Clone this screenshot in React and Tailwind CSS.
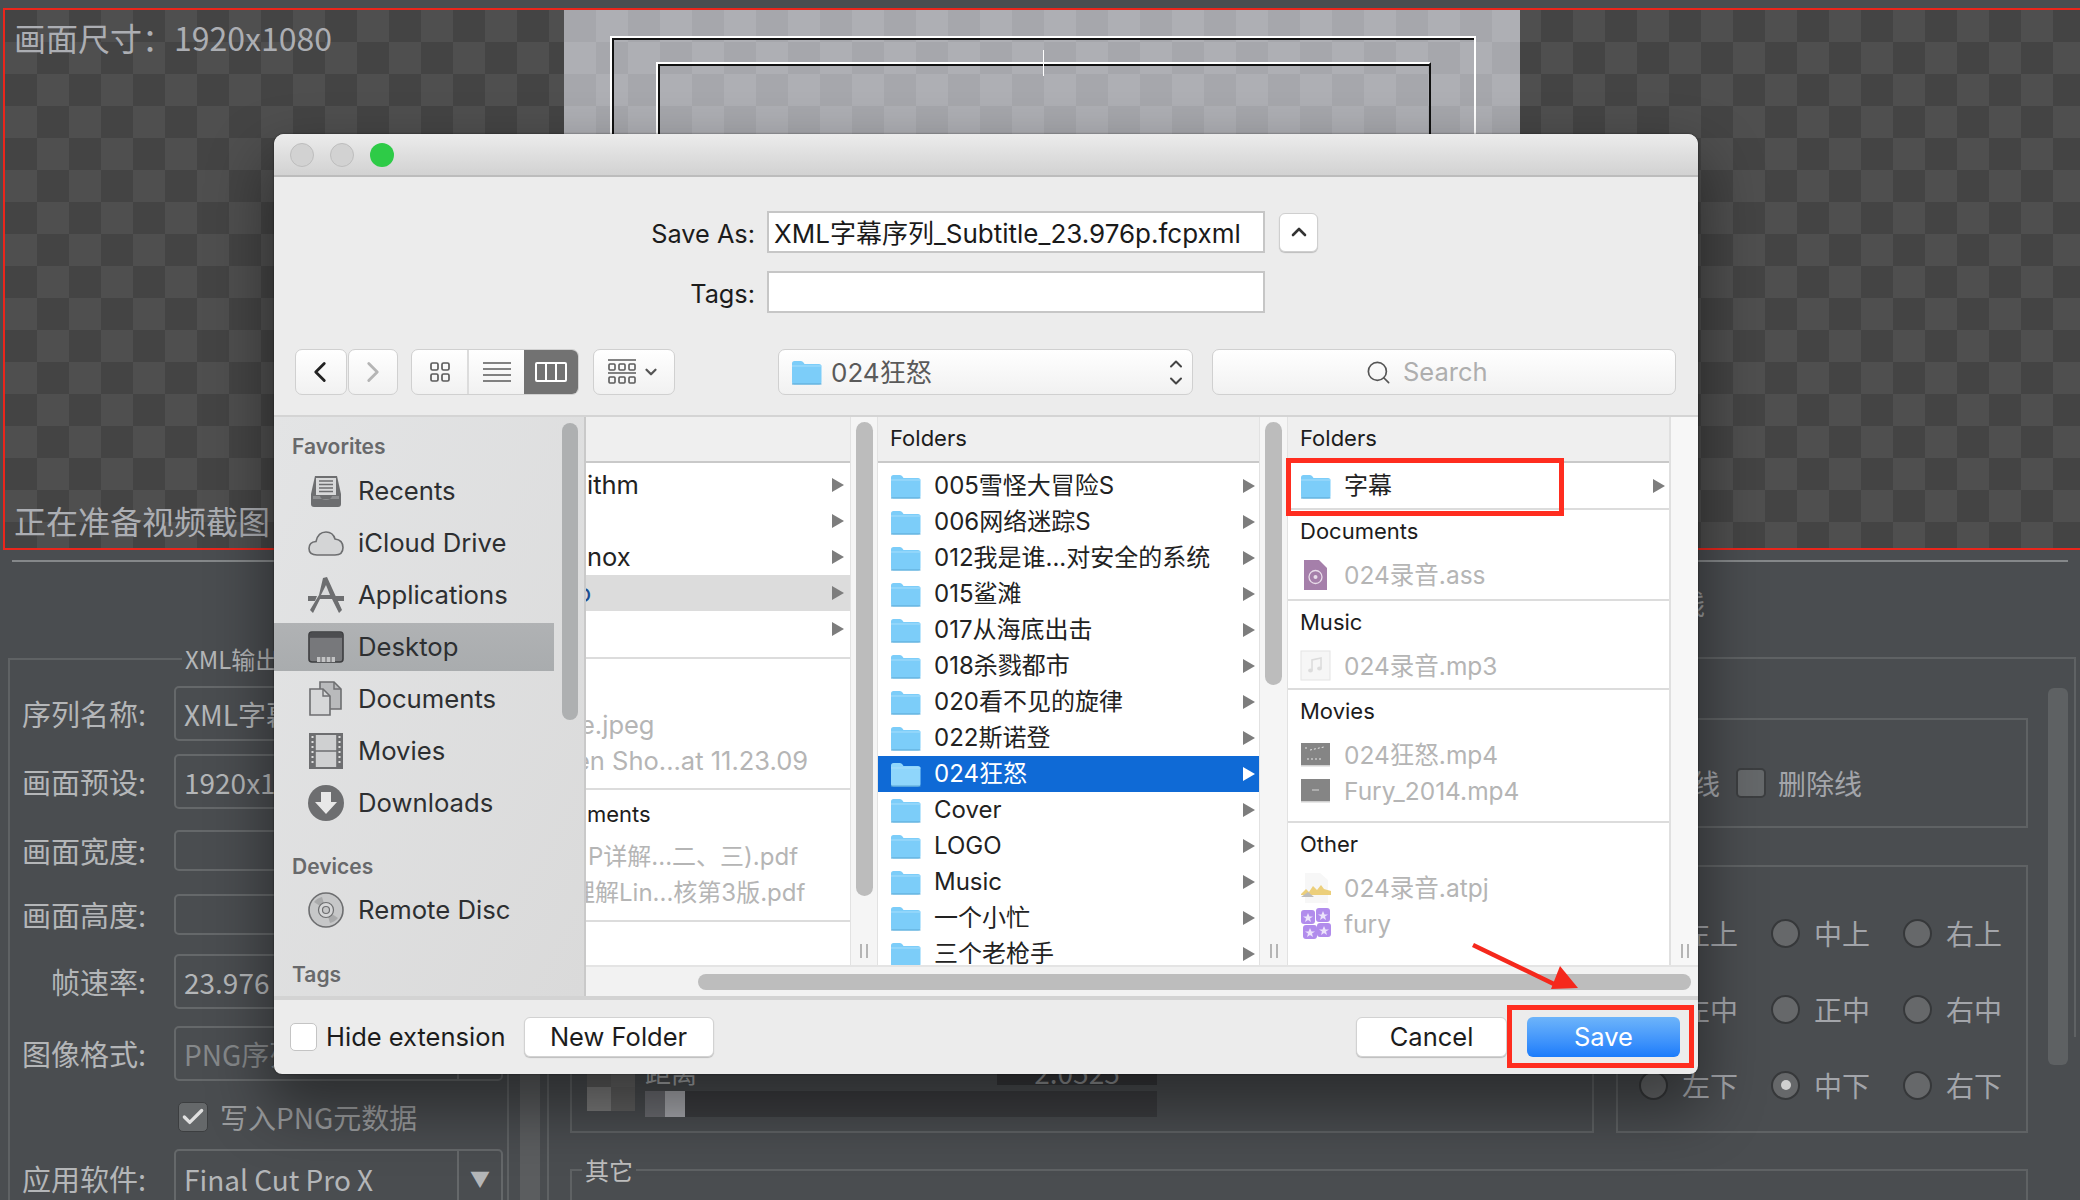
import React from 'react';
import { ChevronLeft, ChevronRight, ChevronUp, ChevronDown, Search, Check } from 'lucide-react';

const uiFont = "font-[Inter,'Noto_Sans_CJK_SC',sans-serif]";
const appFont = "font-['Noto_Sans_CJK_SC',sans-serif]";

function FolderIcon({ light }) {
  return (
    <svg width="31" height="25" viewBox="0 0 31 25" className="shrink-0">
      <path d="M1 3.5Q1 1 3.5 1H10Q11.5 1 12.5 2.5L13.5 4H28Q30.5 4 30.5 6.5V22Q30.5 24.5 28 24.5H3.5Q1 24.5 1 22Z" fill={light ? '#8fd6fb' : '#7ccdf9'} />
      <path d="M1 6H30.5" stroke="#a6defc" strokeWidth="1" />
      <path d="M1 24H30.5" stroke="#5aa7d3" strokeWidth="1" />
    </svg>
  );
}

function Arrow({ white }) {
  return (
    <svg width="12" height="14" viewBox="0 0 12 14" className="shrink-0">
      <path d="M0 0L12 7L0 14Z" fill={white ? '#ffffff' : '#7d7d7d'} />
    </svg>
  );
}

// sidebar glyphs, all on a 36 box
function SideIcon({ name }) {
  const c = '#6d6e70';
  if (name === 'recents') return (
    <svg width="36" height="36" viewBox="0 0 36 36">
      <path d="M7 3H29L33 21V31Q33 34 30 34H6Q3 34 3 31V21Z" fill={c} />
      <rect x="8" y="5" width="20" height="17" fill="#d8d9da" />
      <path d="M11 8H25M11 11.5H25M11 15H25M11 18.5H25" stroke={c} strokeWidth="1.4" />
      <path d="M5 23H12Q13 27 18 27Q23 27 24 23H31V26H5Z" fill="#8e8f91" />
    </svg>
  );
  if (name === 'cloud') return (
    <svg width="36" height="36" viewBox="0 0 36 36">
      <path d="M9 30Q1 30 1 23.5Q1 17 8 16.5Q10 7 18 7Q25 7 27 14Q35 15 35 22.5Q35 30 27 30Z" fill="#d4d5d6" stroke={c} strokeWidth="1.6" />
    </svg>
  );
  if (name === 'apps') return (
    <svg width="36" height="36" viewBox="0 0 36 36">
      <path d="M15 1L19 0L34 33L31 36L24 22H12L5 36L2 33L11 18Z" fill={c} />
      <path d="M0 19H9L7 24H0ZM27 19H36V24H29Z" fill={c} />
      <path d="M18 8L22 18H13Z" fill="#d9dadb" />
    </svg>
  );
  if (name === 'desktop') return (
    <svg width="36" height="36" viewBox="0 0 36 36">
      <rect x="1" y="3" width="34" height="30" rx="3" fill="#77787b" stroke="#3d3e40" strokeWidth="1.6" />
      <rect x="1.8" y="3.8" width="32.4" height="5" fill="#4c4d50" />
      <path d="M9 28H27V33H9Z" fill="#c2c3c4" />
      <path d="M13 28V33M18 28V33M23 28V33" stroke="#5a5b5e" />
    </svg>
  );
  if (name === 'docs') return (
    <svg width="36" height="36" viewBox="0 0 36 36">
      <path d="M12 1H26L33 8V28H12Z" fill="#b9babc" stroke={c} strokeWidth="1.6" />
      <path d="M2 8H15L22 15V34H2Z" fill="#d6d7d8" stroke={c} strokeWidth="1.6" />
      <path d="M15 8V15H22M26 1V8H33" fill="none" stroke={c} strokeWidth="1.4" />
    </svg>
  );
  if (name === 'movies') return (
    <svg width="36" height="36" viewBox="0 0 36 36">
      <rect x="2" y="1" width="32" height="34" fill="#cfd0d1" stroke={c} strokeWidth="2" />
      <path d="M7 1V35M29 1V35M7 18H29" stroke={c} strokeWidth="1.6" />
      <path d="M2 1H7V35H2ZM29 1H34V35H29Z" fill={c} />
      <path d="M3.5 4H5.5M3.5 9H5.5M3.5 14H5.5M3.5 19H5.5M3.5 24H5.5M3.5 29H5.5M30.5 4H32.5M30.5 9H32.5M30.5 14H32.5M30.5 19H32.5M30.5 24H32.5M30.5 29H32.5" stroke="#dddddd" strokeWidth="2" />
    </svg>
  );
  if (name === 'downloads') return (
    <svg width="36" height="36" viewBox="0 0 36 36">
      <circle cx="18" cy="18" r="18" fill={c} />
      <path d="M13 7H23V17H29L18 29L7 17H13Z" fill="#e8e8e8" />
    </svg>
  );
  return (
    <svg width="36" height="36" viewBox="0 0 36 36">
      <circle cx="18" cy="18" r="17" fill="#c6c7c8" stroke={c} strokeWidth="1.6" />
      <path d="M18 18L6 10A14 14 0 0 1 14 5ZM18 18L30 26A14 14 0 0 1 22 31Z" fill="#a9aaab" />
      <circle cx="18" cy="18" r="7.5" fill="#d5d6d7" stroke={c} strokeWidth="1.2" />
      <circle cx="18" cy="18" r="3.5" fill="#c6c7c8" stroke={c} strokeWidth="1.2" />
    </svg>
  );
}

// thumbnails in the last column
function FileIcon({ name }) {
  if (name === 'ass') return (
    <svg width="31" height="32" viewBox="0 0 31 32" className="shrink-0">
      <path d="M4 1H19L27 9V31H4Z" fill="#a57faa" />
      <circle cx="15.5" cy="18" r="6.5" fill="none" stroke="#e9dcea" strokeWidth="1.3" />
      <circle cx="15.5" cy="18" r="2" fill="#e9dcea" />
    </svg>
  );
  if (name === 'mp3') return (
    <svg width="31" height="32" viewBox="0 0 31 32" className="shrink-0">
      <rect x="1" y="1" width="29" height="29" fill="#f6f6f6" stroke="#e4e4e4" />
      <path d="M12 20V10L21 8V18" fill="none" stroke="#dcdcdc" strokeWidth="1.6" />
      <ellipse cx="10.5" cy="20.5" rx="2.4" ry="2" fill="#dcdcdc" />
      <ellipse cx="19.5" cy="18.5" rx="2.4" ry="2" fill="#dcdcdc" />
    </svg>
  );
  if (name === 'mp4a' || name === 'mp4b') return (
    <svg width="31" height="32" viewBox="0 0 31 32" className="shrink-0">
      <rect x="1" y="4" width="29" height="22" fill="#858585" />
      <rect x="1" y="26" width="29" height="1.5" fill="#d0d0d0" />
      {name === 'mp4a'
        ? <path d="M7 20H22M10 11L24 8M5 9H9" stroke="#e4e4e4" strokeWidth="1" strokeDasharray="2 2" />
        : <path d="M12 15H19" stroke="#c9c9c9" strokeWidth="1.2" />}
    </svg>
  );
  if (name === 'atpj') return (
    <svg width="31" height="32" viewBox="0 0 31 32" className="shrink-0">
      <path d="M5 1H20L28 8V31H5Z" fill="#f7f7f7" />
      <path d="M1 22L6 17L9 20L13 14L17 18L21 13L24 17L31 19V23H1Z" fill="#eccf7b" />
      <path d="M1 25L8 20L14 25Z" fill="#bdbdbd" />
    </svg>
  );
  return (
    <svg width="31" height="32" viewBox="0 0 31 32" className="shrink-0">
      <rect x="1" y="2" width="14" height="14" rx="3" fill="#b18cec" />
      <rect x="16" y="0" width="14" height="14" rx="3" fill="#b18cec" />
      <rect x="3" y="17" width="14" height="14" rx="3" fill="#b18cec" />
      <rect x="17" y="15" width="14" height="14" rx="3" fill="#b18cec" />
      <path d="M8 5L9.5 8.5H13L10 10.5L11 14L8 12L5 14L6 10.5L3 8.5H6.5Z M23 3L24.5 6.5H28L25 8.5L26 12L23 10L20 12L21 8.5L18 6.5H21.5Z M10 20L11.5 23.5H15L12 25.5L13 29L10 27L7 29L8 25.5L5 23.5H8.5Z M24 18L25.5 21.5H29L26 23.5L27 27L24 25L21 27L22 23.5L19 21.5H22.5Z" fill="#ece3fb" />
    </svg>
  );
}

function Resizer() {
  return (
    <div className="flex justify-center gap-[4px] h-[14px]">
      <span className="w-[2px] bg-[#b5b5b5]" />
      <span className="w-[2px] bg-[#b5b5b5]" />
    </div>
  );
}

function ScrollStrip({ thumb, width }) {
  return (
    <div className={`${width} shrink-0 bg-[#f5f5f5] border-l border-r border-[#e2e2e2] flex flex-col items-center pt-[5px]`}>
      <div className={`w-[17px] ${thumb} rounded-full bg-[#bcbcbc]`} />
      <div className="mt-auto mb-[7px]"><Resizer /></div>
    </div>
  );
}

const sidebarFav = [
  ['recents', 'Recents'],
  ['cloud', 'iCloud Drive'],
  ['apps', 'Applications'],
];
const sidebarFav2 = [
  ['docs', 'Documents'],
  ['movies', 'Movies'],
  ['downloads', 'Downloads'],
];

const midFolders = ['005雪怪大冒险S', '006网络迷踪S', '012我是谁...对安全的系统', '015鲨滩', '017从海底出击', '018杀戮都市', '020看不见的旋律', '022斯诺登', '024狂怒', 'Cover', 'LOGO', 'Music', '一个小忙', '三个老枪手'];

function SideRow({ icon, label, selected }) {
  return (
    <div className={selected
      ? 'flex items-center gap-[12px] h-[48px] my-[2px] w-[280px] pl-[32px] bg-gradient-to-b from-[#b0b2b4] to-[#a9acae]'
      : 'flex items-center gap-[12px] h-[52px] pl-[32px]'}>
      <span className="w-[40px] flex justify-center"><SideIcon name={icon} /></span>
      <span className="text-[25.7px] leading-none text-[#2d2f31]">{label}</span>
    </div>
  );
}

function FileRow({ icon, name }) {
  return (
    <div className="flex items-center h-[36px] pl-[12px] gap-[13px]">
      <FileIcon name={icon} />
      <span className="text-[24.5px] text-[#b5b5b5] whitespace-nowrap">{name}</span>
    </div>
  );
}

function Section({ title, h, children }) {
  return (
    <div className={`${h} border-t-2 border-[#dcdcdc]`}>
      <div className="h-[42px] flex items-center pl-[12px] text-[22px] text-[#1c1c1c]">{title}</div>
      <div className="pt-[5px]">{children}</div>
    </div>
  );
}

function Dialog() {
  return (
    <div className={`absolute left-[274px] top-[134px] w-[1424px] h-[940px] rounded-t-[10px] rounded-b-[8px] overflow-hidden bg-[#ececec] shadow-[0_0_2px_rgba(0,0,0,0.6),0_30px_60px_6px_rgba(0,0,0,0.42)] ${uiFont}`}>
      <div className="h-[43px] flex items-center gap-[16px] pl-[16px] bg-gradient-to-b from-[#ececec] to-[#d2d2d2] border-b-2 border-[#bcbcbc]">
        <span className="w-[24px] h-[24px] rounded-full bg-[#d2d2d2] border border-[#bdbdbd]" />
        <span className="w-[24px] h-[24px] rounded-full bg-[#d2d2d2] border border-[#bdbdbd]" />
        <span className="w-[24px] h-[24px] rounded-full bg-[#2ecb47]" />
      </div>

      <div className="h-[172px] pt-[34px] flex flex-col gap-[18px]">
        <div className="flex items-center h-[42px]">
          <div className="w-[481px] pt-[3px] text-right text-[25.3px] text-[#1c1c1c]">Save As:</div>
          <div className="ml-[12px] w-[498px] h-[42px] bg-white border-2 border-[#c6c6c6] flex items-center pl-[5px] pt-[3px] text-[26px] text-[#1a1a1a] whitespace-nowrap">XML字幕序列_Subtitle_23.976p.fcpxml</div>
          <div className="ml-[14px] w-[39px] h-[39px] bg-white rounded-[6px] border border-[#cfcfcf] shadow-[0_1px_1px_rgba(0,0,0,0.2)] flex items-center justify-center">
            <ChevronUp size={24} strokeWidth={2.6} className="text-[#333]" />
          </div>
        </div>
        <div className="flex items-center h-[42px]">
          <div className="w-[481px] pt-[3px] text-right text-[25.3px] text-[#1c1c1c]">Tags:</div>
          <div className="ml-[12px] w-[498px] h-[42px] bg-white border-2 border-[#c6c6c6]" />
        </div>
      </div>

      <div className="h-[46px] flex items-stretch pl-[21px]">
        <div className="w-[52px] rounded-[7px] border border-[#d0d0d0] bg-gradient-to-b from-white to-[#f1f1f1] flex items-center justify-center pr-[2px]">
          <ChevronLeft size={34} strokeWidth={2} className="text-[#222]" />
        </div>
        <div className="ml-[1px] w-[50px] rounded-[7px] border border-[#d0d0d0] bg-gradient-to-b from-white to-[#f1f1f1] flex items-center justify-center">
          <ChevronRight size={34} strokeWidth={2} className="text-[#b5b5b5]" />
        </div>
        <div className="ml-[13px] w-[168px] rounded-[7px] border border-[#d0d0d0] bg-gradient-to-b from-white to-[#f1f1f1] flex overflow-hidden">
          <div className="w-[57px] flex items-center justify-center border-r-2 border-[#dcdcdc]">
            <svg width="20" height="20" viewBox="0 0 20 20" fill="none" stroke="#5b5b5b" strokeWidth="1.7">
              <rect x="1" y="1" width="7" height="7" rx="1.5" /><rect x="12" y="1" width="7" height="7" rx="1.5" />
              <rect x="1" y="12" width="7" height="7" rx="1.5" /><rect x="12" y="12" width="7" height="7" rx="1.5" />
            </svg>
          </div>
          <div className="w-[55px] flex items-center justify-center">
            <svg width="28" height="20" viewBox="0 0 28 20" stroke="#5b5b5b" strokeWidth="1.7">
              <path d="M0 1H28M0 7H28M0 13H28M0 19H28" />
            </svg>
          </div>
          <div className="flex-1 bg-[#727272] flex items-center justify-center">
            <svg width="32" height="20" viewBox="0 0 32 20" fill="none" stroke="#ffffff" strokeWidth="2">
              <rect x="1" y="1" width="30" height="18" rx="1" /><path d="M11 1V19M21 1V19" />
            </svg>
          </div>
        </div>
        <div className="ml-[14px] w-[82px] rounded-[7px] border border-[#d0d0d0] bg-gradient-to-b from-white to-[#f1f1f1] flex items-center justify-center gap-[6px]">
          <svg width="28" height="26" viewBox="0 0 28 26" fill="none" stroke="#5b5b5b" strokeWidth="1.6">
            <path d="M0 1H28M0 14H28" />
            <rect x="1" y="5" width="6" height="6" rx="1" /><rect x="11" y="5" width="6" height="6" rx="1" /><rect x="21" y="5" width="6" height="6" rx="1" />
            <rect x="1" y="18" width="6" height="6" rx="1" /><rect x="11" y="18" width="6" height="6" rx="1" /><rect x="21" y="18" width="6" height="6" rx="1" />
          </svg>
          <ChevronDown size={18} strokeWidth={3} className="text-[#555]" />
        </div>
        <div className="ml-[103px] w-[415px] rounded-[7px] border border-[#d0d0d0] bg-gradient-to-b from-white to-[#f1f1f1] flex items-center pl-[12px]">
          <FolderIcon />
          <span className="ml-[9px] text-[26px] text-[#5a5a5a]">024狂怒</span>
          <span className="ml-auto mr-[6px] flex flex-col -space-y-[3px] text-[#444]">
            <ChevronUp size={20} strokeWidth={2.4} />
            <ChevronDown size={20} strokeWidth={2.4} />
          </span>
        </div>
        <div className="ml-[19px] w-[464px] rounded-[7px] border border-[#d0d0d0] bg-gradient-to-b from-white to-[#f1f1f1] flex items-center gap-[11px] pl-[152px]">
          <Search size={27} strokeWidth={1.5} className="text-[#555]" />
          <span className="text-[25.5px] text-[#aeaeae]">Search</span>
        </div>
      </div>

      <div className="mt-[20px] h-[581px] border-t-2 border-[#d4d4d4] flex bg-white">
        {/* sidebar */}
        <div className="relative w-[312px] shrink-0 border-r-2 border-[#c9c9c9] bg-gradient-to-br from-[#e3e4e5] to-[#dadada]">
          <div className="pl-[18px] h-[48px] pt-[16px] text-[21px] font-semibold leading-[28px] text-[#68696b]">Favorites</div>
          {sidebarFav.map(([i, l]) => <SideRow key={l} icon={i} label={l} />)}
          <SideRow icon="desktop" label="Desktop" selected />
          {sidebarFav2.map(([i, l]) => <SideRow key={l} icon={i} label={l} />)}
          <div className="pl-[18px] mt-[23px] h-[32px] text-[21px] font-semibold leading-[30px] text-[#68696b]">Devices</div>
          <SideRow icon="disc" label="Remote Disc" />
          <div className="pl-[18px] mt-[24px] text-[21px] font-semibold leading-[30px] text-[#68696b]">Tags</div>
          <div className="absolute left-[288px] top-[6px] w-[16px] h-[297px] rounded-full bg-[#aeb0b1]" />
        </div>

        <div className="flex-1 min-w-0 flex flex-col">
          <div className="flex h-[548px] overflow-hidden">
            {/* clipped first column */}
            <div className="w-[264px] shrink-0 overflow-hidden text-[25.5px] text-[#222]">
              <div className="h-[46px] bg-[#efefef] border-b-2 border-[#c9c9c9]" />
              <div className="h-[196px] pt-[4px] border-b-2 border-[#dcdcdc]">
                {['ithm', '', 'nox', 'o', ''].map((t, i) => (
                  <div key={i} className={i === 3 ? 'h-[36px] flex items-center justify-between pr-[6px] bg-[#dcdcdc]' : 'h-[36px] flex items-center justify-between pr-[6px]'}>
                    <span className={i === 3 ? '-ml-[10px] text-[#1b4d91]' : 'pl-[1px]'}>{t}</span>
                    <Arrow />
                  </div>
                ))}
              </div>
              <div className="h-[131px] pt-[48px] border-b-2 border-[#dcdcdc] text-[#b5b5b5] whitespace-nowrap">
                <div className="h-[36px] -ml-[6px] flex items-center">e.jpeg</div>
                <div className="h-[36px] -ml-[11px] flex items-center">en Sho...at 11.23.09</div>
              </div>
              <div className="h-[132px] border-b-2 border-[#dcdcdc] whitespace-nowrap text-[24px]">
                <div className="h-[49px] pl-[1px] flex items-center text-[22px] text-[#1c1c1c]">ments</div>
                <div className="h-[36px] pl-[2px] flex items-center text-[#b5b5b5]">P详解...二、三).pdf</div>
                <div className="h-[36px] -ml-[15px] flex items-center text-[#b5b5b5]">理解Lin...核第3版.pdf</div>
              </div>
            </div>
            <ScrollStrip thumb="h-[474px]" width="w-[28px]" />

            {/* folders */}
            <div className="w-[381px] shrink-0 overflow-hidden">
              <div className="h-[46px] pb-[2px] bg-[#efefef] border-b-2 border-[#c9c9c9] flex items-center pl-[12px] text-[22px] text-[#1c1c1c]">Folders</div>
              <div className="pt-[5px]">
                {midFolders.map((f) => (
                  <div key={f} className={f === '024狂怒'
                    ? 'h-[36px] flex items-center pl-[12px] pr-[4px] bg-[#0f6ad6] text-white'
                    : 'h-[36px] flex items-center pl-[12px] pr-[4px] text-[#222]'}>
                    <FolderIcon light={f === '024狂怒'} />
                    <span className="ml-[13px] text-[24px] whitespace-nowrap">{f}</span>
                    <span className="ml-auto"><Arrow white={f === '024狂怒'} /></span>
                  </div>
                ))}
              </div>
            </div>
            <ScrollStrip thumb="h-[263px]" width="w-[29px]" />

            {/* last column */}
            <div className="w-[381px] shrink-0 overflow-hidden">
              <div className="h-[46px] pb-[2px] bg-[#efefef] border-b-2 border-[#c9c9c9] flex items-center pl-[12px] text-[22px] text-[#1c1c1c]">Folders</div>
              <div className="h-[45px] pt-[5px] text-[24px]">
                <div className="h-[36px] flex items-center pl-[12px] pr-[4px] text-[#222]">
                  <FolderIcon />
                  <span className="ml-[13px]">字幕</span>
                  <span className="ml-auto"><Arrow /></span>
                </div>
              </div>
              <Section title="Documents" h="h-[91px]"><FileRow icon="ass" name="024录音.ass" /></Section>
              <Section title="Music" h="h-[89px]"><FileRow icon="mp3" name="024录音.mp3" /></Section>
              <Section title="Movies" h="h-[133px]">
                <FileRow icon="mp4a" name="024狂怒.mp4" />
                <FileRow icon="mp4b" name="Fury_2014.mp4" />
              </Section>
              <Section title="Other" h="h-[144px]">
                <FileRow icon="atpj" name="024录音.atpj" />
                <FileRow icon="fury" name="fury" />
              </Section>
            </div>
            <div className="flex-1 bg-[#f7f7f7] border-l-2 border-[#e0e0e0] flex flex-col justify-end pb-[7px]"><Resizer /></div>
          </div>
          <div className="flex-1 bg-[#f2f2f2] border-t-2 border-[#e4e4e4] pl-[112px] pr-[7px] pt-[7px]">
            <div className="h-[16px] rounded-full bg-[#bdbdbd]" />
          </div>
        </div>
      </div>

      <div className="h-[78px] border-t-4 border-[#d3d3d3] flex items-center pl-[16px] pr-[18px] text-[25.5px] text-[#1c1c1c]">
        <span className="w-[27px] h-[28px] rounded-[5px] bg-white border border-[#c4c4c4]" />
        <span className="ml-[9px]">Hide extension</span>
        <button className="ml-[18px] w-[190px] h-[40px] rounded-[6px] bg-white border border-[#d2d2d2] shadow-[0_1px_1px_rgba(0,0,0,0.2)]">New Folder</button>
        <button className="ml-auto w-[151px] h-[40px] rounded-[6px] bg-white border border-[#d2d2d2] shadow-[0_1px_1px_rgba(0,0,0,0.2)]">Cancel</button>
        <button className="ml-[20px] w-[153px] h-[40px] rounded-[6px] bg-gradient-to-b from-[#6db4fa] to-[#1a7cfb] text-white">Save</button>
      </div>
    </div>
  );
}

function Field({ top, h, label, text, drop, muted }) {
  return (
    <div className={`flex items-center ${top}`}>
      <div className="w-[136px] text-right text-[29px] text-[#b4b6b8] whitespace-nowrap">{label}</div>
      <div className={`ml-[28px] w-[329px] ${h} rounded-[5px] border-2 border-[#65686a] flex items-center pl-[8px] text-[28px] ${muted ? 'text-[#85888a]' : 'text-[#b4b6b8]'} whitespace-nowrap overflow-hidden`}>
        <span>{text}</span>
        {drop && (
          <span className="ml-auto w-[44px] h-full border-l-2 border-[#65686a] flex items-center justify-center text-[20px]">{drop === 'arrow' ? '▼' : ''}</span>
        )}
      </div>
    </div>
  );
}

function Radio({ label, on }) {
  return (
    <div className="flex items-center gap-[14px]">
      <span className="w-[29px] h-[29px] rounded-full bg-[#66686a] border-2 border-[#36383a] flex items-center justify-center">
        {on && <span className="w-[10px] h-[10px] rounded-full bg-[#d0d0d0]" />}
      </span>
      <span className="text-[28px] text-[#a3a5aa]">{label}</span>
    </div>
  );
}

export default function App() {
  return (
    <div className={`relative w-[2080px] h-[1200px] overflow-hidden bg-[#4a4d50] ${appFont}`}>
      <div className="pt-[8px] pl-[3px]">
        <div className="h-[542px] border-2 border-r-0 border-[#ea261c] flex bg-[repeating-conic-gradient(#4f4f4f_0_25%,#444444_0_50%)] bg-[length:64px_64px]">
          <div className="w-[559px] flex flex-col justify-between pl-[9px] pt-[5px] pb-[5px] text-[#acaeb3]">
            <div className="text-[32px] leading-[44px] whitespace-nowrap">画面尺寸：1920x1080</div>
            <div className="text-[32px] leading-[46px] whitespace-nowrap">正在准备视频截图</div>
          </div>
          <div className="w-[956px] pt-[26px] pl-[46px] bg-[repeating-conic-gradient(#aeafb4_0_25%,#a6a7ac_0_50%)] bg-[length:64px_64px]">
            <div className="relative w-[866px] h-[300px] border-t-2 border-l-2 border-r-2 border-white shadow-[inset_0_2px_0_#111,inset_2px_0_0_#111] pt-[24px] pl-[44px]">
              <div className="w-[775px] h-[250px] border-t-2 border-l-2 border-[#ffffff] border-r-2 border-r-[#111] shadow-[inset_0_2px_0_#111,inset_2px_0_0_#111]" />
              <span className="absolute left-[431px] top-[12px] w-[1px] h-[26px] bg-white" />
            </div>
          </div>
        </div>
      </div>

      <div className="mt-[10px] mx-[12px] h-[2px] bg-[#85888a]" />

      <div className="flex items-start">
        <fieldset className="ml-[8px] mt-[83px] w-[501px] h-[700px] border-2 border-[#5f6264] shrink-0">
          <legend className="ml-[172px] px-[3px] text-[24px] leading-[28px] text-[#b4b6b8]">XML输出</legend>
          <Field top="mt-[13px]" h="h-[55px]" label="序列名称:" text="XML字幕序列_Subtitle" />
          <Field top="mt-[13px]" h="h-[55px]" label="画面预设:" text="1920x1080" drop="empty" />
          <Field top="mt-[20px]" h="h-[41px]" label="画面宽度:" text="" />
          <Field top="mt-[20px]" h="h-[41px]" label="画面高度:" text="" />
          <Field top="mt-[18px]" h="h-[55px]" label="帧速率:" text="23.976" drop="empty" />
          <Field top="mt-[17px]" h="h-[55px]" label="图像格式:" text="PNG序列" drop="empty" muted />
          <div className="mt-[16px] ml-[168px] flex items-center gap-[12px]">
            <span className="w-[30px] h-[30px] rounded-[5px] bg-[#65686a] border border-[#3c3e40] flex items-center justify-center">
              <Check size={26} strokeWidth={3} className="text-[#e0e0e0]" />
            </span>
            <span className="text-[28px] leading-[40px] text-[#9a9c9e]">写入PNG元数据</span>
          </div>
          <Field top="mt-[12px]" h="h-[60px]" label="应用软件:" text="Final Cut Pro X" drop="arrow" />
        </fieldset>

        <div className="ml-[11px] w-[20px] h-[638px] shrink-0 bg-[#5b5d5f]" />

        <div className="ml-[7px] w-[1529px] h-[638px] shrink-0 border-l-2 border-[#5f6264] pl-[21px]">
          <div className="h-[26px] mt-[28px] ml-[1107px] text-[28px] leading-[26px] text-[#9a9c9e]">线</div>
          <div className="mt-[41px] flex items-start">
            <div className="w-[1024px] h-[476px] border-2 border-[#5f6264] flex flex-col justify-end pl-[15px] pb-[14px]">
              <div className="flex items-end">
                <div className="w-[48px] h-[72px] mb-[6px] shrink-0 grid grid-cols-2 grid-rows-[48px_24px]">
                  <span className="bg-[#5c5c5c]" /><span className="bg-[#646464]" />
                  <span className="bg-[#7c7c7c]" /><span className="bg-[#606060]" />
                </div>
                <div className="ml-[10px] w-[512px] shrink-0">
                  <div className="h-[26px] flex items-center justify-between">
                    <span className="text-[26px] leading-[26px] text-[#a8aaac]">距离</span>
                    <span className="w-[160px] h-[26px] bg-[#36373a] text-center text-[28px] leading-[26px] text-[#8e9092]">2.0525</span>
                  </div>
                  <div className="mt-[6px] h-[26px] bg-[#3c3d40] flex">
                    <span className="w-[20px] bg-[#6c6d72]" />
                    <span className="w-[20px] bg-[#a8a9ae]" />
                  </div>
                </div>
              </div>
            </div>
            <div className="ml-[10px] w-[472px] h-[380px] border-t-2 border-r-2 border-[#5f6264] pl-[12px] pt-[59px] flex">
              <div className="w-[412px] shrink-0">
                <div className="h-[110px] border-2 border-[#5f6264] flex items-center pl-[18px] pt-[20px]">
                  <span className="text-[28px] text-[#a3a5aa]">下划线</span>
                  <span className="ml-[16px] w-[30px] h-[30px] rounded-[5px] bg-[#65686a] border-2 border-[#3c3e40]" />
                  <span className="ml-[12px] text-[28px] text-[#a3a5aa]">删除线</span>
                </div>
                <div className="mt-[37px] h-[268px] border-2 border-[#5f6264] pt-[28px] pl-[21px] grid grid-cols-[132px_132px_132px] auto-rows-[76px] items-center">
                  <Radio label="左上" /><Radio label="中上" /><Radio label="右上" />
                  <Radio label="左中" /><Radio label="正中" /><Radio label="右中" />
                  <Radio label="左下" /><Radio label="中下" on /><Radio label="右下" />
                </div>
              </div>
              <div className="ml-[20px] mt-[-30px] w-[20px] h-[377px] rounded-[6px] bg-[#5e6163]" />
            </div>
          </div>
          <fieldset className="mt-[19px] w-[1458px] h-[120px] border-2 border-[#5f6264]">
            <legend className="ml-[10px] px-[3px] text-[24px] leading-[36px] text-[#bdbdbd]">其它</legend>
            <div className="mt-[14px] ml-[423px] w-[162px] h-[40px] bg-[#2f3032]" />
          </fieldset>
        </div>
      </div>

      <Dialog />

      {/* red annotations from the screenshot's author */}
      <div className="absolute left-[1286px] top-[458px] w-[278px] h-[58px] border-[5px] border-[#ff2d1f]" />
      <div className="absolute left-[1507px] top-[1005px] w-[187px] h-[63px] border-[5px] border-[#ff2d1f]" />
      <svg className="absolute left-[1470px] top-[940px]" width="112" height="52" viewBox="0 0 112 52">
        <path d="M3 5L88 46" stroke="#f5281c" strokeWidth="4.5" />
        <path d="M90 26L81 49L108 48Z" fill="#f5281c" />
      </svg>
    </div>
  );
}
